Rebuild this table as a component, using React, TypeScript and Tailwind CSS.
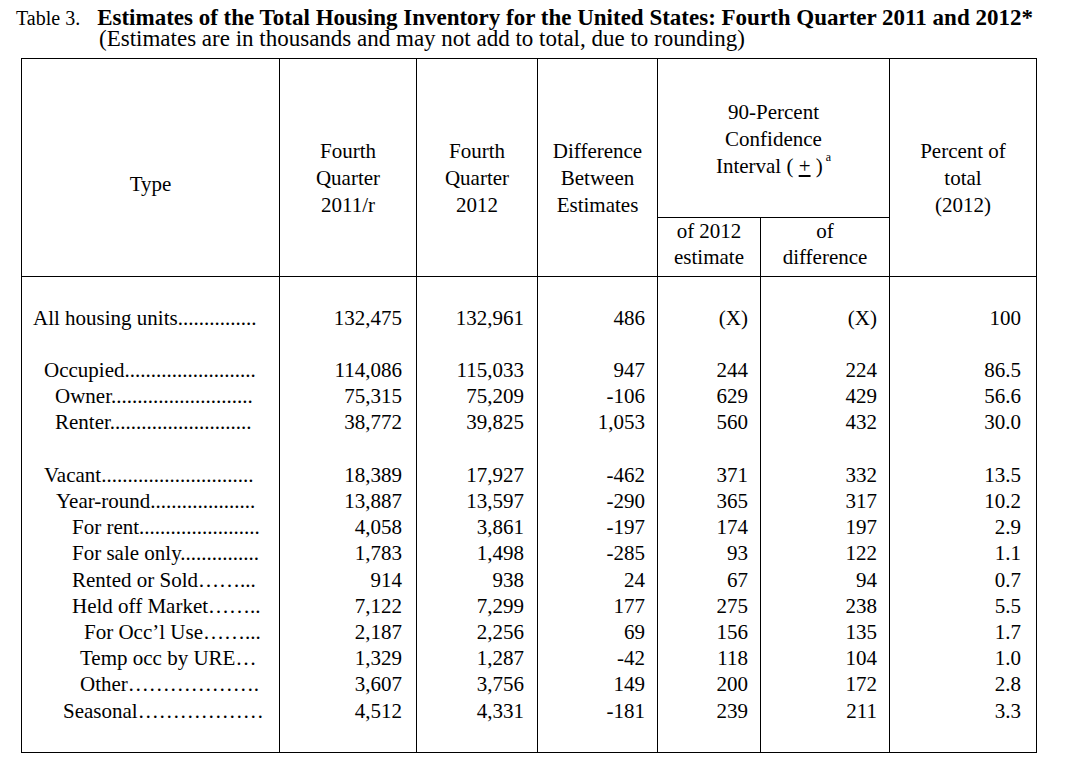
import React from 'react';

interface DataRow {
  label: string;
  indent: number;
  values: string[];
}

// null = blank separator line in the body
const rows: (DataRow | null)[] = [
  { label: 'All housing units...............', indent: 11, values: ['132,475', '132,961', '486', '(X)', '(X)', '100'] },
  null,
  { label: 'Occupied.........................', indent: 22, values: ['114,086', '115,033', '947', '244', '224', '86.5'] },
  { label: 'Owner...........................', indent: 33, values: ['75,315', '75,209', '-106', '629', '429', '56.6'] },
  { label: 'Renter...........................', indent: 33, values: ['38,772', '39,825', '1,053', '560', '432', '30.0'] },
  null,
  { label: 'Vacant.............................', indent: 22, values: ['18,389', '17,927', '-462', '371', '332', '13.5'] },
  { label: 'Year-round....................', indent: 34, values: ['13,887', '13,597', '-290', '365', '317', '10.2'] },
  { label: 'For rent.......................', indent: 50, values: ['4,058', '3,861', '-197', '174', '197', '2.9'] },
  { label: 'For sale only...............', indent: 50, values: ['1,783', '1,498', '-285', '93', '122', '1.1'] },
  { label: 'Rented or Sold……...', indent: 50, values: ['914', '938', '24', '67', '94', '0.7'] },
  { label: 'Held off Market……..', indent: 50, values: ['7,122', '7,299', '177', '275', '238', '5.5'] },
  { label: 'For Occ’l Use……...', indent: 62, values: ['2,187', '2,256', '69', '156', '135', '1.7'] },
  { label: 'Temp occ by URE…', indent: 58, values: ['1,329', '1,287', '-42', '118', '104', '1.0'] },
  { label: 'Other……………….', indent: 58, values: ['3,607', '3,756', '149', '200', '172', '2.8'] },
  { label: 'Seasonal………………', indent: 41, values: ['4,512', '4,331', '-181', '239', '211', '3.3'] },
];

const numPad = ['pr-[14px]', 'pr-[13px]', 'pr-[12px]', 'pr-[12px]', 'pr-[12px]', 'pr-[15px]'];

const App: React.FC = () => {
  return (
    <div className="min-h-screen w-[1073px] bg-white text-black font-['Liberation_Serif','Times_New_Roman',serif]">
      {/* Title */}
      <div className="pt-[8px] text-[23px] leading-[20.5px]">
        <p className="pl-[16px] whitespace-nowrap">
          <span className="text-[20px]">Table 3.</span>
          <b className="ml-[17px]">Estimates of the Total Housing Inventory for the United States: Fourth Quarter 2011 and 2012*</b>
        </p>
        <p className="pl-[99px] whitespace-nowrap">
          (Estimates are in thousands and may not add to total, due to rounding)
        </p>
      </div>

      <table className="mt-[9px] ml-[21px] w-[1015px] table-fixed border-collapse border border-black text-[21px]">
        <colgroup>
          <col className="w-[258px]" />
          <col className="w-[137px]" />
          <col className="w-[121px]" />
          <col className="w-[120px]" />
          <col className="w-[103px]" />
          <col className="w-[129px]" />
          <col className="w-[147px]" />
        </colgroup>
        <thead className="leading-[27px]">
          <tr className="h-[159px]">
            <th rowSpan={2} className="border border-black align-top pt-[112px] font-normal">
              Type
            </th>
            <th rowSpan={2} className="border border-black align-top pt-[79px] font-normal">
              Fourth
              <br />
              Quarter
              <br />
              2011/r
            </th>
            <th rowSpan={2} className="border border-black align-top pt-[79px] font-normal">
              Fourth
              <br />
              Quarter
              <br />
              2012
            </th>
            <th rowSpan={2} className="border border-black align-top pt-[79px] font-normal">
              Difference
              <br />
              Between
              <br />
              Estimates
            </th>
            <th colSpan={2} className="border border-black align-top pt-[40px] font-normal">
              90-Percent
              <br />
              Confidence
              <br />
              Interval ( <span className="underline underline-offset-2">+</span> )
              <sup className="ml-[3px] text-[12px] align-[6px]">a</sup>
            </th>
            <th rowSpan={2} className="border border-black align-top pt-[79px] font-normal">
              Percent of
              <br />
              total
              <br />
              (2012)
            </th>
          </tr>
          <tr className="h-[59px]">
            <th className="border border-black align-top pt-0 leading-[26px] font-normal">
              of 2012
              <br />
              estimate
            </th>
            <th className="border border-black align-top pt-0 leading-[26px] font-normal">
              of
              <br />
              difference
            </th>
          </tr>
        </thead>
        <tbody className="leading-[26.2px]">
          <tr className="h-[28px]">
            {Array.from({ length: 7 }).map((_, i) => (
              <td key={i} className="border-x border-black p-0" />
            ))}
          </tr>
          {rows.map((row, idx) =>
            row ? (
              <tr key={idx}>
                <td className="border-x border-black p-0 whitespace-nowrap overflow-hidden" style={{ paddingLeft: row.indent }}>
                  {row.label}
                </td>
                {row.values.map((v, i) => (
                  <td key={i} className={`border-x border-black p-0 text-right ${numPad[i]}`}>
                    {v}
                  </td>
                ))}
              </tr>
            ) : (
              <tr key={idx}>
                {Array.from({ length: 7 }).map((_, i) => (
                  <td key={i} className="border-x border-black p-0">
                    &nbsp;
                  </td>
                ))}
              </tr>
            ),
          )}
          <tr className="h-[29px]">
            {Array.from({ length: 7 }).map((_, i) => (
              <td key={i} className="border-x border-black p-0" />
            ))}
          </tr>
        </tbody>
      </table>
    </div>
  );
};

export default App;
